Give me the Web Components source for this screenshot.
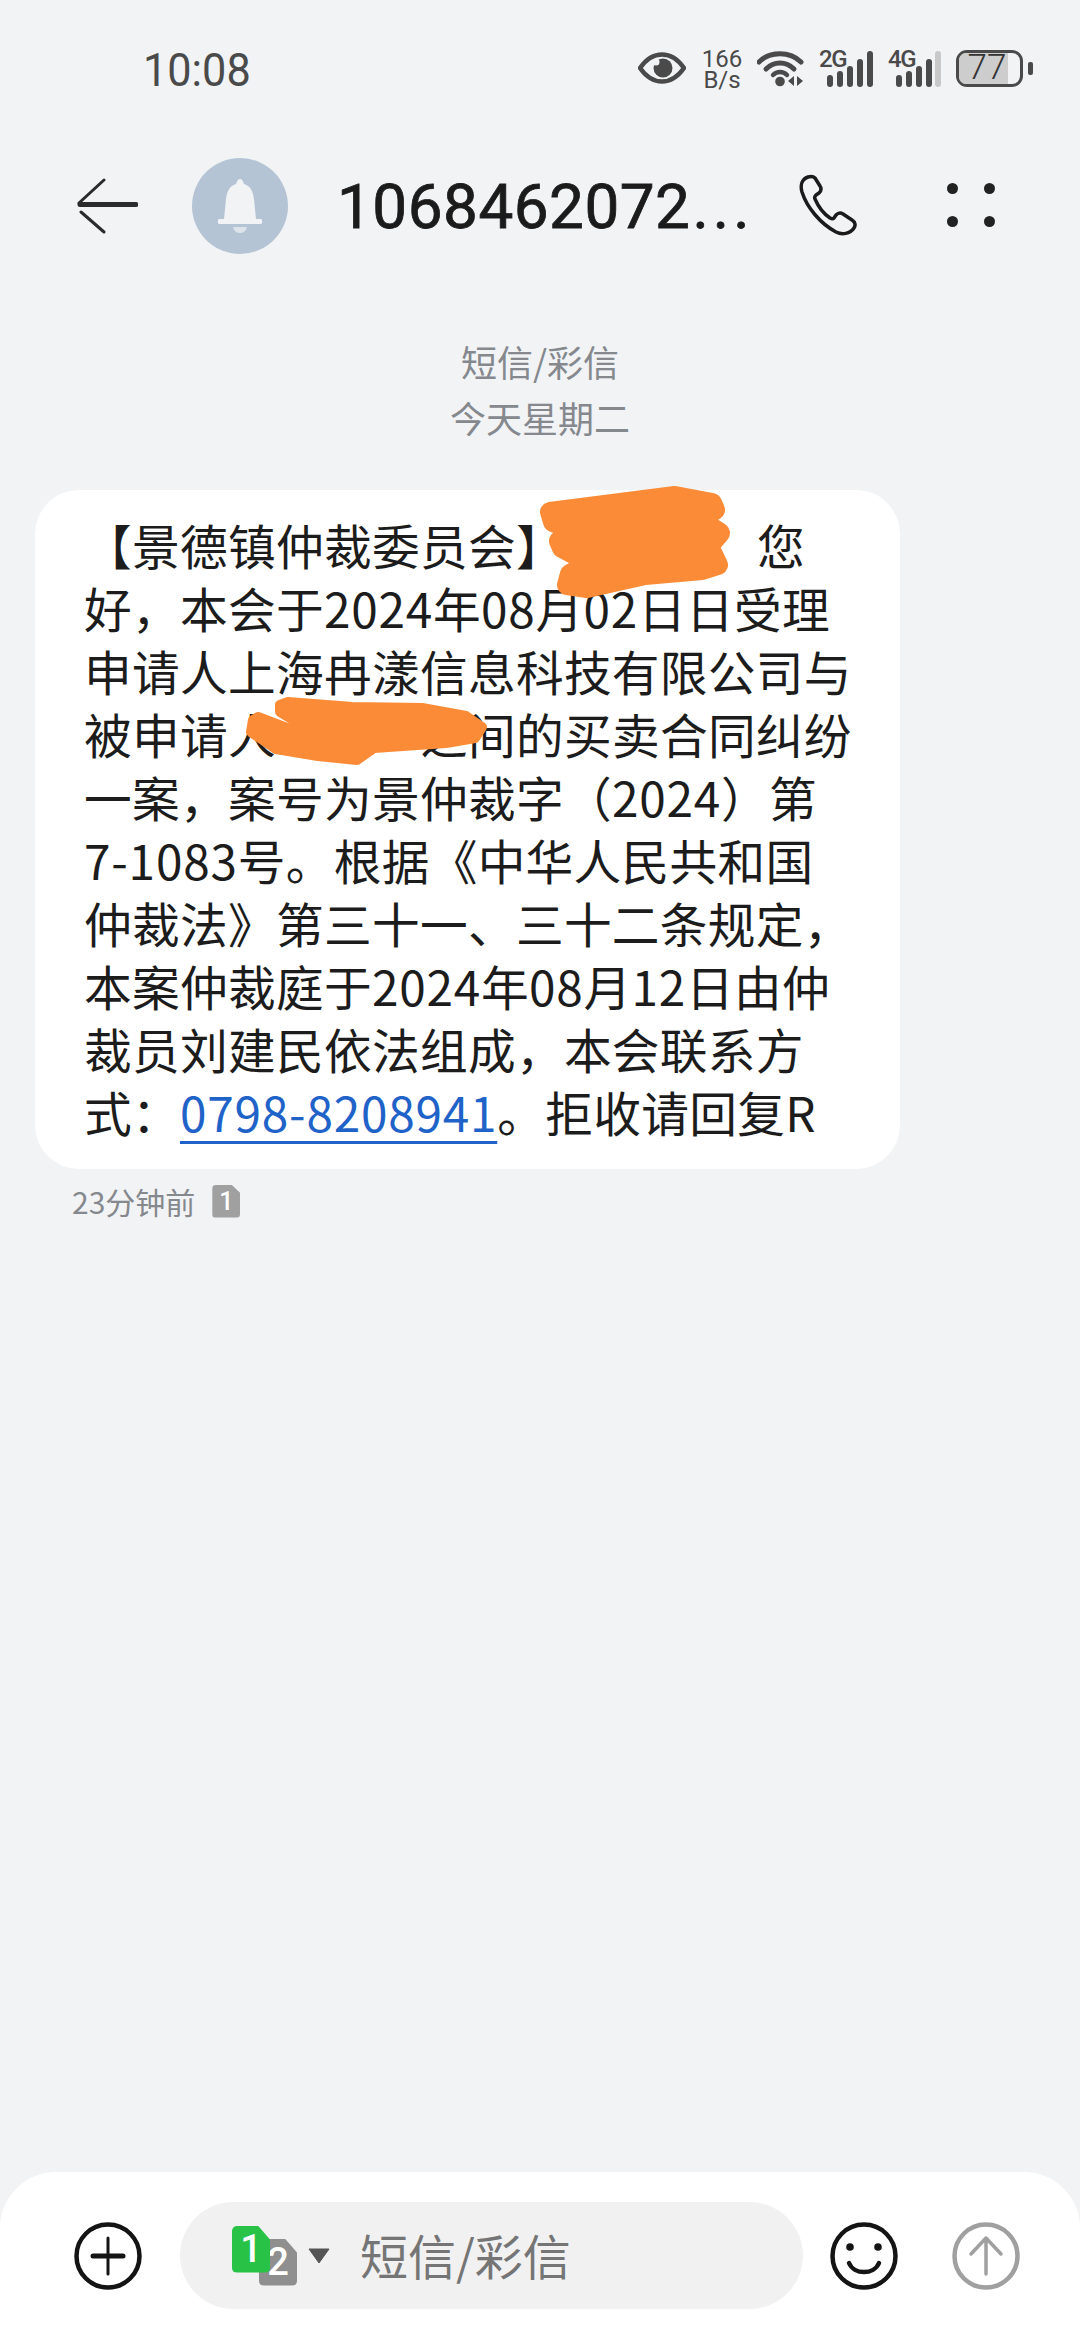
<!DOCTYPE html>
<html lang="zh-CN">
<head>
<meta charset="utf-8">
<title>短信</title>
<style>
  html, body { margin: 0; padding: 0; background: #f1f3f5; }
  body { width: 1080px; height: 2340px; font-family: "Noto Sans CJK SC", "Noto Sans", sans-serif; }
  sms-app { height: 2340px; }
  sms-bubble i.gap { display: inline-block; }
  sms-bubble a { color: #1f63c9; letter-spacing: .8px; text-decoration: underline; text-decoration-thickness: 3px; text-underline-offset: 9px; }
  sms-bubble .n { letter-spacing: .8px; }
  sms-bubble span { white-space: nowrap; }
</style>
</head>
<body>
<sms-app>
  <sms-status-bar slot="top" time="10:08" battery="77"></sms-status-bar>
  <sms-header slot="top" number="1068462072..."></sms-header>
  <sms-date-label slot="top" kind="短信/彩信" day="今天星期二"></sms-date-label>
  <sms-bubble>
    <span>【景德镇仲裁委员会】<i class="gap" style="width:193px"></i>您</span><br>
    <span>好，本会于<span class="n">2024</span>年<span class="n">08</span>月<span class="n">02</span>日日受理</span><br>
    <span>申请人上海冉漾信息科技有限公司与</span><br>
    <span>被申请人<i class="gap" style="width:144px"></i>之间的买卖合同纠纷</span><br>
    <span>一案，案号为景仲裁字（<span class="n">2024</span>）第</span><br>
    <span><span class="n">7-1083</span>号。根据《中华人民共和国</span><br>
    <span>仲裁法》第三十一、三十二条规定，</span><br>
    <span>本案仲裁庭于<span class="n">2024</span>年<span class="n">08</span>月<span class="n">12</span>日由仲</span><br>
    <span>裁员刘建民依法组成，本会联系方</span><br>
    <span>式：<a>0798-8208941</a>。拒收请回复<span class="n">R</span></span>
  </sms-bubble>
  <sms-meta when="23分钟前" sim="1"></sms-meta>
  <sms-compose slot="bottom" placeholder="短信/彩信"></sms-compose>
</sms-app>

<script>
class SmsApp extends HTMLElement {
  constructor() {
    super();
    this.attachShadow({mode: 'open'});
    this.shadowRoot.innerHTML = `
    <style>
      :host { display: flex; flex-direction: column; width: 1080px; background: #f1f3f5; }
      main { flex: 1; display: flex; flex-direction: column; }
    </style>
    <slot name="top"></slot>
    <main><slot></slot></main>
    <slot name="bottom"></slot>
    `;
  }
}

class SmsStatusBar extends HTMLElement {
  constructor() {
    super();
    this.attachShadow({mode: 'open'});
    const time = this.getAttribute('time');
    const battery = this.getAttribute('battery');
    this.shadowRoot.innerHTML = `
    <style>
      :host { display: flex; align-items: center; height: 136px; padding: 0 47px 0 143px; color: #4a4a4a; font-family: Roboto, sans-serif; }
      .time { font-size: 47px; line-height: 52px; margin-top: 4px; flex: 1; transform: scaleX(.92); transform-origin: left; }
      .icons { display: flex; align-items: center; }
      .rate { width: 44px; margin: 4px 13px 0 14px; text-align: center; font-size: 24px; line-height: 21px; }
      .net { position: relative; width: 56px; height: 37px; }
      .net b { position: absolute; left: 0; top: -3px; font-size: 24px; line-height: 24px; font-weight: 500; letter-spacing: -1.5px; }
      .net svg { position: absolute; left: 0; top: 0; }
      .battery { position: relative; width: 67px; height: 37px; box-sizing: border-box; border: 3.500px solid #4a4a4a; border-radius: 11px; margin-left: 12px; }
      .battery::before { content: ""; position: absolute; left: 0; top: 0; bottom: 0; width: 49px; background: #cdcdcd; border-radius: 7px 0 0 7px; }
      .battery span { position: absolute; left: 0; right: 5px; top: -6px; font-size: 35px; line-height: 41px; text-align: center; font-weight: 300; color: #333; }
      .nub { width: 5px; height: 13px; border-radius: 2px; background: #4a4a4a; margin-left: 5px; }
    </style>
    <div class="time">${time}</div>
    <div class="icons">
      <svg width="48" height="32" viewBox="0 0 48 32" style="margin-left:-2px">
        <path d="M2 16C9 6 16 2.500 24 2.500S39 6 46 16C39 26 32 29.500 24 29.500S9 26 2 16Z" fill="none" stroke="#4a4a4a" stroke-width="4.500" stroke-linejoin="round"/>
        <circle cx="25" cy="16" r="9.500" fill="#4a4a4a"/>
        <circle cx="18" cy="10" r="3.500" fill="#f1f3f5"/>
      </svg>
      <div class="rate">166<br>B/s</div>
      <svg width="48" height="38" viewBox="0 0 48 38" style="margin-right:14px">
        <path d="M2 13C13 2 33 2 44 13" fill="none" stroke="#4a4a4a" stroke-width="5" stroke-linecap="round"/>
        <path d="M9 20C17 12 29 12 37 20" fill="none" stroke="#4a4a4a" stroke-width="5" stroke-linecap="round"/>
        <path d="M16 26C20 22 26 22 30 26" fill="none" stroke="#4a4a4a" stroke-width="4.500" stroke-linecap="round"/>
        <circle cx="23" cy="32.500" r="4.800" fill="#4a4a4a"/>
        <path d="M37 27v10l-6-5ZM40 27v10l6-5Z" fill="#4a4a4a"/>
      </svg>
      <div class="net" style="margin-right:13px">
        <b>2G</b>
        <svg width="56" height="37" viewBox="0 0 56 37">
          <g stroke="#4a4a4a" stroke-width="6" stroke-linecap="round">
            <path d="M11 28V34M21 24V34M31 19V34M41 12V34M51 4V34"/>
          </g>
        </svg>
      </div>
      <div class="net">
        <b>4G</b>
        <svg width="56" height="37" viewBox="0 0 56 37">
          <g stroke="#4a4a4a" stroke-width="6" stroke-linecap="round">
            <path d="M11 28V34M21 24V34M31 19V34M41 12V34"/>
          </g>
          <path d="M50 4V34" stroke="#c8c8c8" stroke-width="6" stroke-linecap="round"/>
        </svg>
      </div>
      <div class="battery"><span>${battery}</span></div>
      <div class="nub"></div>
    </div>
    `;
  }
}

class SmsHeader extends HTMLElement {
  constructor() {
    super();
    this.attachShadow({mode: 'open'});
    const number = this.getAttribute('number').replace('...', '<span>...</span>');
    this.shadowRoot.innerHTML = `
    <style>
      :host { display: flex; align-items: center; height: 138px; padding-left: 76px; color: #1b1b1b; font-family: Roboto, sans-serif; }
      .back { margin-top: 2px; }
      .avatar { width: 96px; height: 96px; border-radius: 50%; background: #b4c4d4; margin: 2px 0 0 54px; display: flex; align-items: center; justify-content: center; }
      .number { width: 430px; margin: 4px 0 0 49px; font-size: 62px; line-height: 70px; font-weight: 400; letter-spacing: .5px; -webkit-text-stroke: .8px #1b1b1b; white-space: nowrap; }
      .number span { letter-spacing: 4px; margin-left: 2px; }
      .call { margin-left: 31px; }
      .more { margin-left: 87px; display: grid; grid-template-columns: 11px 11px; gap: 22px 26px; }
      .more i { width: 11px; height: 11px; border-radius: 50%; background: #222; }
    </style>
    <svg class="back" width="62" height="56" viewBox="0 0 62 56">
      <path d="M4 26.500H60" stroke="#2b2b2b" stroke-width="5" stroke-linecap="round"/>
      <path d="M28 2L3 25M5 34L28 54" fill="none" stroke="#2b2b2b" stroke-width="3" stroke-linecap="round"/>
    </svg>
    <div class="avatar">
      <svg width="46" height="56" viewBox="0 0 46 56">
        <path d="M23 1c2 0 3 2 4 5 7 2 9 8 10 15l2 20h5c1.500 0 1.500 5 0 5H2c-1.500 0-1.500-5 0-5h5l2-20c1-7 3-13 10-15 1-3 2-5 4-5Z" fill="#f1f3f5"/>
        <path d="M16 49h14c-1 4-4 6-7 6s-6-2-7-6Z" fill="#dde3ea"/>
      </svg>
    </div>
    <div class="number">${number}</div>
    <svg class="call" width="62" height="62" viewBox="0 0 62 62">
      <path d="M10 3C4 5 2 11 4 18 9 34 23 50 38 58c6 3 14 2 18-4 2-3 1-6-2-8l-9-6c-3-2-5-1-7 1l-2 3c-1 1-2 1-4 0-6-4-12-12-15-19-1-2 0-3 1-4l3-2c2-2 3-4 1-7L17 4c-2-2-4-2-7-1Z" fill="none" stroke="#1b1b1b" stroke-width="3.500" stroke-linejoin="round"/>
    </svg>
    <div class="more"><i></i><i></i><i></i><i></i></div>
    `;
  }
}

class SmsDateLabel extends HTMLElement {
  constructor() {
    super();
    this.attachShadow({mode: 'open'});
    this.shadowRoot.innerHTML = `
    <style>
      :host { display: block; padding: 59px 0 45px; text-align: center; color: #85888d; font-size: 36px; line-height: 56px; font-family: "Noto Sans CJK SC", sans-serif; }
    </style>
    <div>${this.getAttribute('kind')}</div>
    <div>${this.getAttribute('day')}</div>
    `;
  }
}

class SmsBubble extends HTMLElement {
  constructor() {
    super();
    this.attachShadow({mode: 'open'});
    this.shadowRoot.innerHTML = `
    <style>
      :host { display: block; position: relative; width: 865px; box-sizing: border-box; margin-left: 35px; padding: 23px 0 26px 49px; background: #fff; border-radius: 44px; color: #1c1c1c; font-size: 47.700px; letter-spacing: .3px; line-height: 63px; white-space: nowrap; font-family: "Noto Sans CJK SC", sans-serif; }
      svg { position: absolute; left: 0; top: 0; overflow: visible; pointer-events: none; }
    </style>
    <slot></slot>
    <svg width="865" height="678">
      <g transform="translate(-35 -490)" fill="#fb8b36" stroke="#fb8b36" stroke-linejoin="round">
        <path stroke-width="20" d="M550 512L675 496 712 503 715 510 700 520 720 533 709 546 718 565 702 570 645 575 587 588 567 585 570 574 590 563 562 548 559 541 580 532 553 522Z"/>
        <path stroke-width="10" d="M280 705L288 702 352 707 422 708 466 716 482 727 475 738 446 743 374 748 357 760 318 756 276 749 251 732 253 720 258 717 295 731 300 724 280 712Z"/>
      </g>
    </svg>
    `;
  }
}

class SmsMeta extends HTMLElement {
  constructor() {
    super();
    this.attachShadow({mode: 'open'});
    this.shadowRoot.innerHTML = `
    <style>
      :host { display: flex; align-items: center; height: 34px; margin: 15px 0 0 72px; color: #85888c; font-size: 30px; line-height: 34px; font-family: "Noto Sans CJK SC", sans-serif; }
      .sim { width: 28px; height: 33px; margin-left: 17px; background: #a0a0a0; border-radius: 4px; clip-path: polygon(0 0, 68% 0, 100% 26%, 100% 100%, 0 100%); color: #fff; font: 500 25px/33px Roboto, sans-serif; text-align: center; }
    </style>
    <span>${this.getAttribute('when')}</span>
    <div class="sim">${this.getAttribute('sim')}</div>
    `;
  }
}

class SmsCompose extends HTMLElement {
  constructor() {
    super();
    this.attachShadow({mode: 'open'});
    this.shadowRoot.innerHTML = `
    <style>
      :host { display: flex; align-items: flex-start; height: 168px; box-sizing: border-box; padding: 30px 0 0 74px; background: #fff; border-radius: 56px 56px 0 0; font-family: "Noto Sans CJK SC", sans-serif; }
      .side { margin-top: 20px; flex: none; }
      .field { display: flex; align-items: center; width: 623px; height: 107px; margin-left: 38px; padding-left: 52px; box-sizing: border-box; background: #f1f1f2; border-radius: 54px; }
      .sims { position: relative; width: 66px; height: 60px; flex: none; }
      .card { position: absolute; width: 38px; height: 47px; border-radius: 5px; clip-path: polygon(0 0, 68% 0, 100% 30%, 100% 100%, 0 100%); color: #fff; font: 500 38px/47px Roboto, sans-serif; text-align: center; }
      .card.two { left: 27px; top: 13px; background: #8f8f8f; }
      .card.one { left: 0; top: 0; background: #28c247; }
      .arrow { flex: none; margin: 0 30px 0 10px; }
      .hint { color: #757575; font-size: 48px; line-height: 60px; margin-top: -3px; white-space: nowrap; }
    </style>
    <svg class="side" width="68" height="68" viewBox="0 0 68 68">
      <circle cx="34" cy="34" r="31.500" fill="none" stroke="#141414" stroke-width="4.500"/>
      <path d="M34 16V52" stroke="#141414" stroke-width="3" stroke-linecap="round"/>
      <path d="M19 34H49" stroke="#141414" stroke-width="5" stroke-linecap="round"/>
    </svg>
    <div class="field">
      <div class="sims">
        <div class="card two">2</div>
        <div class="card one">1</div>
      </div>
      <svg class="arrow" width="22" height="16" viewBox="0 0 22 16"><path d="M1 1H21L11 15Z" fill="#555" stroke="#555" stroke-linejoin="round"/></svg>
      <span class="hint">${this.getAttribute('placeholder')}</span>
    </div>
    <svg class="side" style="margin-left:27px" width="68" height="68" viewBox="0 0 68 68">
      <circle cx="34" cy="34" r="31.500" fill="none" stroke="#141414" stroke-width="4.500"/>
      <circle cx="20" cy="25" r="3.800" fill="#141414"/>
      <circle cx="48" cy="25" r="3.800" fill="#141414"/>
      <path d="M19 41C24 53 44 53 49 41" fill="none" stroke="#141414" stroke-width="4.500" stroke-linecap="round"/>
    </svg>
    <svg class="side" style="margin-left:54px" width="68" height="68" viewBox="0 0 68 68">
      <circle cx="34" cy="34" r="31.500" fill="none" stroke="#a0a0a0" stroke-width="4.500"/>
      <path d="M34 16V52M19 32L34 16L49 32" fill="none" stroke="#a0a0a0" stroke-width="3.500" stroke-linecap="round" stroke-linejoin="round"/>
    </svg>
    `;
  }
}

customElements.define('sms-app', SmsApp);
customElements.define('sms-status-bar', SmsStatusBar);
customElements.define('sms-header', SmsHeader);
customElements.define('sms-date-label', SmsDateLabel);
customElements.define('sms-bubble', SmsBubble);
customElements.define('sms-meta', SmsMeta);
customElements.define('sms-compose', SmsCompose);
</script>
</body>
</html>
